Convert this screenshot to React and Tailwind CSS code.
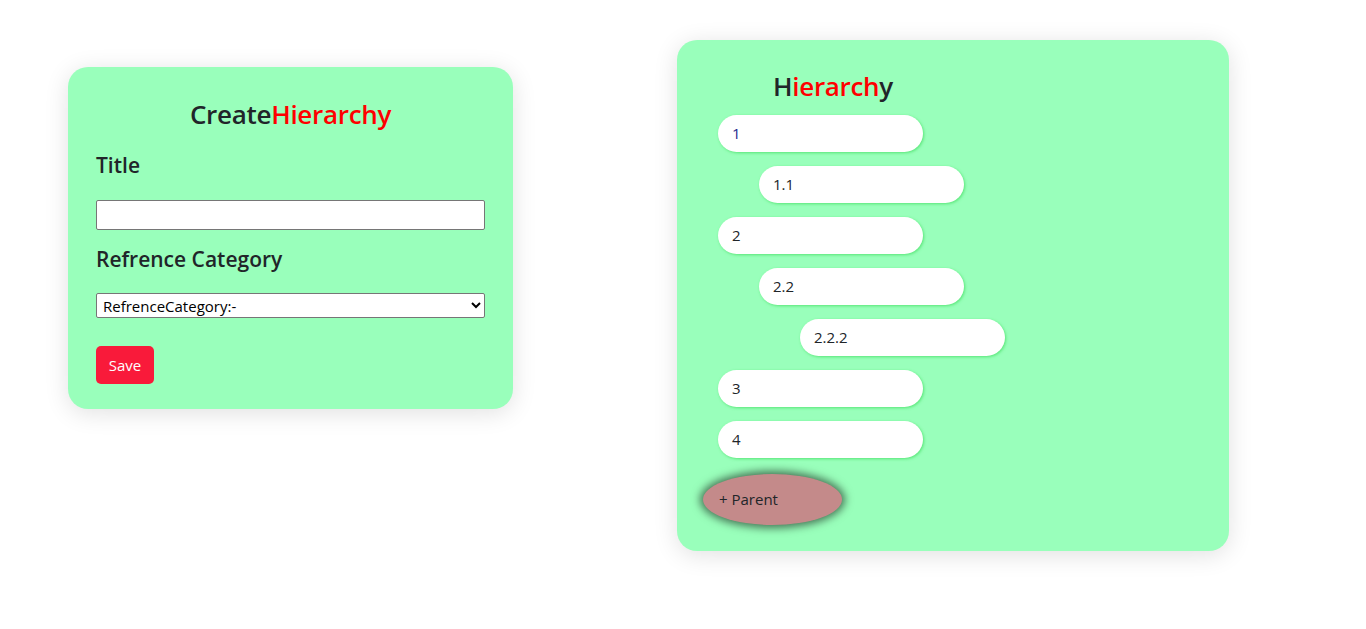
import React from 'react';

const font = { fontFamily: '"Open Sans", "Noto Sans", sans-serif' };

const nodes = [
  { label: '1', level: 0, color: 'text-[#1e2a8c]' },
  { label: '1.1', level: 1 },
  { label: '2', level: 0 },
  { label: '2.2', level: 1 },
  { label: '2.2.2', level: 2 },
  { label: '3', level: 0 },
  { label: '4', level: 0 },
];

const indent = ['ml-0', 'ml-[41px]', 'ml-[82px]'];

function CreateCard() {
  return (
    <div className="mt-[67px] ml-[68px] w-[445px] h-[342px] bg-[#99ffbb] rounded-[20px] shadow-[0_4px_24px_rgba(0,0,0,0.12)] px-[28px] pt-[30px] text-[#212529]">
      <h1 className="text-center text-[26px] leading-[34px] font-semibold tracking-[-0.3px]">
        Create<span className="text-[#ff0000]">Hierarchy</span>
      </h1>
      <h2 className="mt-[20px] text-[21px] leading-[28px] font-semibold">Title</h2>
      <input className="block mt-[21px] w-[389px] h-[30px] bg-white border border-[#767676] rounded-[2px]" />
      <h2 className="mt-[15px] text-[21px] leading-[28px] font-semibold">Refrence Category</h2>
      <select className="block mt-[20px] w-[389px] h-[25px] bg-white border border-[#767676] rounded-[2px] text-[15px] text-black px-[2px]" style={font}>
        <option>RefrenceCategory:-</option>
      </select>
      <button className="mt-[28px] w-[58px] h-[38px] bg-[#f91a3a] text-white text-[15px] rounded-[5px]">
        Save
      </button>
    </div>
  );
}

function HierarchyCard() {
  return (
    <div className="mt-[40px] ml-[164px] w-[552px] h-[511px] bg-[#99ffbb] rounded-[20px] shadow-[0_4px_24px_rgba(0,0,0,0.12)] pl-[41px] pt-[28px] text-[#212529]">
      <h1 className="ml-[55px] text-[26px] leading-[36px] font-semibold tracking-[-0.3px]">
        H<span className="text-[#ff0000]">ierarch</span>y
      </h1>
      <div className="mt-[11px] flex flex-col gap-[14px]">
        {nodes.map((n) => (
          <div
            key={n.label}
            className={`${indent[n.level]} w-[205px] h-[37px] bg-white rounded-full flex items-center pl-[14px] text-[15px] shadow-[1px_1px_3px_rgba(60,220,90,0.7)] ${n.color || 'text-[#212529]'}`}
          >
            {n.label}
          </div>
        ))}
      </div>
      <button className="mt-[16px] -ml-[15px] w-[139px] h-[51px] bg-[#c48a8a] rounded-[50%] text-left pl-[16px] text-[15px] text-[#212529] shadow-[0_0_8px_3px_rgba(0,0,0,0.55)]">
        + Parent
      </button>
    </div>
  );
}

export default function App() {
  return (
    <div className="w-[1366px] h-[629px] bg-white flex items-start" style={font}>
      <CreateCard />
      <HierarchyCard />
    </div>
  );
}
